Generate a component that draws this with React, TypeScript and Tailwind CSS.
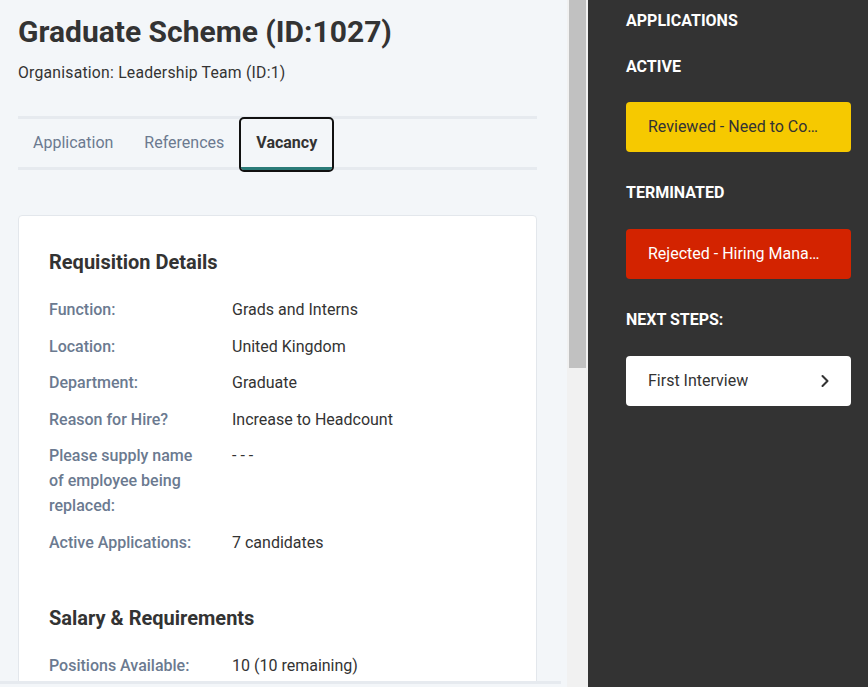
import React from 'react';
import { ChevronRight } from 'lucide-react';

const rows: { label: string; value: string }[] = [
  { label: 'Function:', value: 'Grads and Interns' },
  { label: 'Location:', value: 'United Kingdom' },
  { label: 'Department:', value: 'Graduate' },
  { label: 'Reason for Hire?', value: 'Increase to Headcount' },
  { label: 'Please supply name of employee being replaced:', value: '- - -' },
  { label: 'Active Applications:', value: '7 candidates' },
];

const DetailRow: React.FC<{ label: string; value: string }> = ({ label, value }) => (
  <div className="flex text-[16px] leading-[25px]">
    <div className="w-[183px] shrink-0 pr-[30px] font-medium text-[#6b7a90]">{label}</div>
    <div className="text-[#333333]">{value}</div>
  </div>
);

export default function App() {
  return (
    <div
      className="flex h-[687px] w-[868px] overflow-hidden bg-[#f3f6f9]"
      style={{ fontFamily: 'Roboto, "Liberation Sans", sans-serif' }}
    >
      {/* Main pane */}
      <div className="flex w-[567px] shrink-0 flex-col">
        <div className="h-[681px] overflow-hidden pl-[18px] pr-[30px]">
          <h1 className="pt-[14px] text-[30px] font-bold leading-[36px] text-[#333333]">
            Graduate Scheme (ID:1027)
          </h1>
          <p className="mt-[12px] text-[15.75px] leading-[22px] tracking-[0.22px] text-[#333333]">
            Organisation: Leadership Team (ID:1)
          </p>

          {/* Tabs */}
          <div className="mt-[32px] flex gap-[1px] border-y-[3px] border-[#e6eaef]">
            <button className="-mb-[3px] h-[51px] border-b-[3px] border-transparent px-[15px] text-[16px] text-[#6b7a90]">
              Application
            </button>
            <button className="-mb-[3px] h-[51px] border-b-[3px] border-transparent px-[15px] text-[16px] text-[#6b7a90]">
              References
            </button>
            <button className="-mb-[3px] ml-[1px] h-[51px] rounded-[3px] border-b-[3px] border-[#2a7b78] px-[15px] text-[16px] font-bold text-[#333333] outline-2 outline-[#111111]">
              Vacancy
            </button>
          </div>

          {/* Card */}
          <div className="mt-[45px] rounded-[4px] border border-[#e3e7ec] bg-white pl-[30px] pt-[32px] pb-10">
            <h2 className="text-[20px] font-bold leading-[28px] text-[#333333]">Requisition Details</h2>
            <div className="mt-[21px] flex flex-col gap-[11.5px]">
              {rows.map((r) => (
                <DetailRow key={r.label} label={r.label} value={r.value} />
              ))}
            </div>

            <h2 className="mt-[49px] text-[20px] font-bold leading-[28px] text-[#333333]">Salary &amp; Requirements</h2>
            <div className="mt-[21px] flex flex-col gap-[11.5px]">
              <DetailRow label="Positions Available:" value="10 (10 remaining)" />
            </div>
          </div>
        </div>
        <div className="h-[3px] w-[561px] bg-[#e6eaef]" />
      </div>

      {/* Scrollbar */}
      <div className="w-[21px] shrink-0 bg-[#f1f1f1] pl-[2px] pr-[2px]">
        <div className="h-[368px] w-[17px] bg-[#c1c1c1]" />
      </div>

      {/* Applications panel */}
      <div className="w-[280px] shrink-0 bg-[#333333] pl-[38px] pr-[17px] pt-[11px]">
        <div className="text-[16px] font-bold leading-[20px] text-white">APPLICATIONS</div>

        <div className="mt-[26px] text-[16px] font-bold leading-[20px] text-white">ACTIVE</div>
        <button className="mt-[25px] flex h-[50px] w-full items-center rounded-[4px] bg-[#f6c900] pl-[22px] pr-[26px] text-left text-[16px] text-[#333333]">
          <span className="truncate">Reviewed - Need to Contact Candidate</span>
        </button>

        <div className="mt-[31px] text-[16px] font-bold leading-[20px] text-white">TERMINATED</div>
        <button className="mt-[26px] flex h-[50px] w-full items-center rounded-[4px] bg-[#d32300] pl-[22px] pr-[26px] text-left text-[16px] text-white">
          <span className="truncate">Rejected - Hiring Manager Review</span>
        </button>

        <div className="mt-[31px] text-[16px] font-bold leading-[20px] text-white">NEXT STEPS:</div>
        <button className="mt-[26px] flex h-[50px] w-full items-center justify-between rounded-[4px] bg-white pl-[22px] pr-[16px] text-left text-[16px] text-[#333333]">
          <span className="truncate">First Interview</span>
          <ChevronRight size={20} strokeWidth={2.5} className="text-[#333333]" />
        </button>
      </div>
    </div>
  );
}
